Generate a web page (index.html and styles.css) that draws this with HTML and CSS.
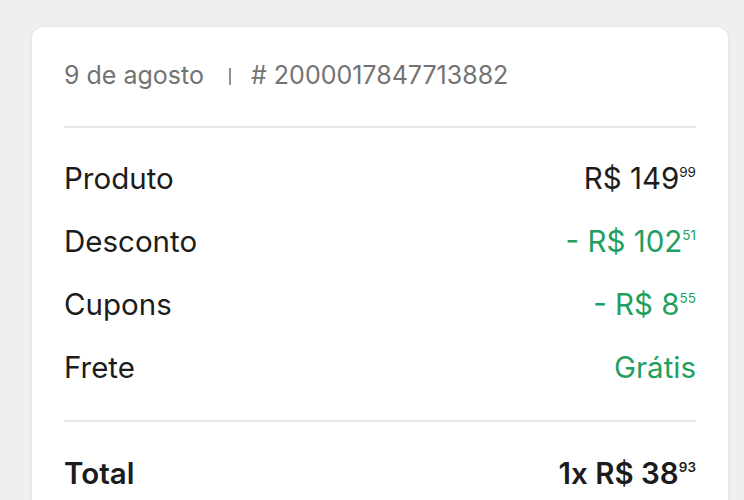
FILE: index.html
```html
<!DOCTYPE html>
<html lang="pt-BR">

<head>
    <meta charset="UTF-8" />
    <title>Detalhes da compra</title>
    <meta name="viewport" content="width=device-width, initial-scale=1" />
    <link rel="stylesheet" href="styles.css">
</head>

<body>
    <div class="pagina">
        <div class="card">
            <div class="cabecalho">
                <span>9 de agosto</span>
                <span class="separador"></span>
                <span># 2000017847713882</span>
            </div>

            <div class="resumo">
                <div class="linha">
                    <span>Produto</span>
                    <span class="valor">R$ 149<sup>99</sup></span>
                </div>
                <div class="linha">
                    <span>Desconto</span>
                    <span class="valor verde">- R$ 102<sup>51</sup></span>
                </div>
                <div class="linha">
                    <span>Cupons</span>
                    <span class="valor verde">- R$ 8<sup>55</sup></span>
                </div>
                <div class="linha">
                    <span>Frete</span>
                    <span class="valor verde">Grátis</span>
                </div>
            </div>

            <div class="total">
                <div class="linha">
                    <span>Total</span>
                    <span class="valor">1x R$ 38<sup>93</sup></span>
                </div>
            </div>
        </div>
    </div>
</body>

</html>
```

FILE: styles.css
```css
body,
html {
    margin: 0;
    padding: 0;
    background-color: #efefef;
    font-family: "Inter", "Open Sans", sans-serif;
    color: #1c1c1c;
}

.pagina {
    padding: 27px 16px 0 32px;
}

.card {
    background-color: #fff;
    border-radius: 12px 12px 0 0;
    box-shadow: 0 1px 4px rgba(0, 0, 0, 0.08);
    padding: 0 32px;
    height: 500px;
}

.cabecalho {
    padding: 32px 0 35px;
    line-height: 32px;
    font-size: 25px;
    color: #737373;
    border-bottom: 2px solid #e6e6e6;
}

.separador {
    display: inline-block;
    width: 2px;
    height: 17px;
    vertical-align: -1px;
    background-color: #8f8f8f;
    margin: 0 13px 0 18px;
}

.resumo {
    padding: 19px 0 21px;
    border-bottom: 2px solid #e6e6e6;
}

.linha {
    display: flex;
    justify-content: space-between;
    align-items: center;
    height: 63px;
    font-size: 29.5px;
    line-height: 1;
}

.valor sup {
    font-size: 13.5px;
    line-height: 1;
    vertical-align: top;
    position: relative;
    top: 2px;
    margin-left: 0;
}

.verde {
    color: #1fa060;
}

.total {
    padding-top: 20px;
}

.total .linha {
    font-weight: 600;
}
```
